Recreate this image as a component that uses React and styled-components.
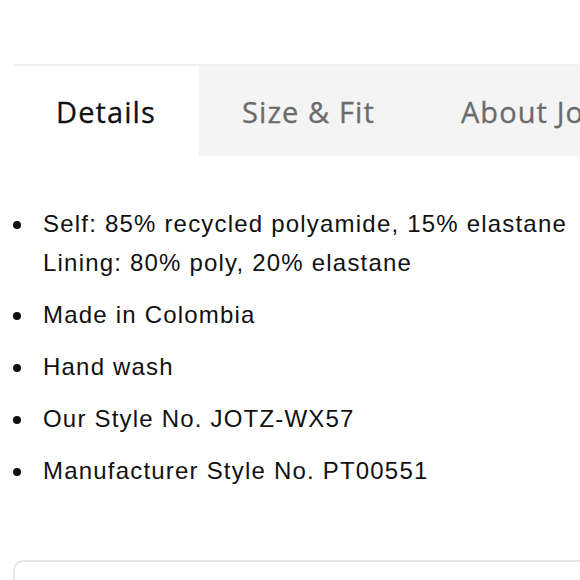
import React, { useState } from "react";
import styled, { createGlobalStyle } from "styled-components";

const GlobalStyle = createGlobalStyle`
  html, body {
    margin: 0;
    padding: 0;
    background: #fff;
  }
  body {
    font-family: "Liberation Sans", Arial, sans-serif;
    overflow: hidden;
  }
`;

const Page = styled.div`
  width: 580px;
  height: 580px;
  overflow: hidden;
  padding: 64px 0 0 13px;
  box-sizing: border-box;
`;

const TabBar = styled.div`
  display: flex;
  border-top: 2px solid #f0f0f0;
  white-space: nowrap;
`;

const Tab = styled.button`
  flex: none;
  height: 90px;
  padding: 0 43px;
  border: none;
  margin: 0;
  background: ${(p) => (p.$active ? "#fff" : "#f4f4f4")};
  color: ${(p) => (p.$active ? "#111" : "#6b6b6b")};
  font-family: "Open Sans", sans-serif;
  font-size: 29px;
  font-weight: 500;
  letter-spacing: 1.1px;
  -webkit-text-stroke: 0.3px currentColor;
  cursor: pointer;
`;

const List = styled.ul`
  list-style: none;
  margin: 48px 0 0;
  padding: 0;
  display: flex;
  flex-direction: column;
  gap: 13px;
`;

const Item = styled.li`
  display: flex;
  align-items: flex-start;
  font-size: 24px;
  letter-spacing: 1.2px;
  line-height: 39px;
  color: #111;
  white-space: nowrap;
`;

const Dot = styled.span`
  flex: none;
  width: 8px;
  height: 8px;
  border-radius: 50%;
  background: #111;
  margin: 17px 22px 0 0;
`;

const Box = styled.div`
  margin-top: 70px;
  height: 80px;
  border: 2px solid #e6e6e6;
  border-radius: 10px;
  margin-right: -20px;
`;

const tabs = ["Details", "Size & Fit", "About Johanna Ortiz"];

const details = [
  ["Self: 85% recycled polyamide, 15% elastane", "Lining: 80% poly, 20% elastane"],
  ["Made in Colombia"],
  ["Hand wash"],
  ["Our Style No. JOTZ-WX57"],
  ["Manufacturer Style No. PT00551"],
];

export default function App() {
  const [active, setActive] = useState(0);
  return (
    <>
      <GlobalStyle />
      <Page>
        <TabBar>
          {tabs.map((t, i) => (
            <Tab key={t} $active={active === i} onClick={() => setActive(i)}>
              {t}
            </Tab>
          ))}
        </TabBar>
        <List>
          {details.map((lines) => (
            <Item key={lines[0]}>
              <Dot />
              <div>
                {lines.map((l) => (
                  <div key={l}>{l}</div>
                ))}
              </div>
            </Item>
          ))}
        </List>
        <Box />
      </Page>
    </>
  );
}
